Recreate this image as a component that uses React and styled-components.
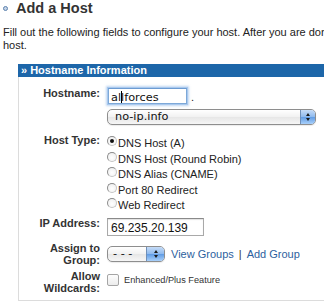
import React from "react";
import styled, { createGlobalStyle } from "styled-components";

const GlobalStyle = createGlobalStyle`
  html, body { margin: 0; padding: 0; background: #fff; overflow: hidden; }
  body { font-family: "Liberation Sans", Arial, sans-serif; color: #222; }
`;

const Page = styled.div`
  width: 470px;
  padding-left: 3px;
`;

const Title = styled.h1`
  margin: 0;
  display: flex;
  align-items: center;
  gap: 8px;
  height: 16px;
  font-size: 14.5px;
  line-height: 16px;
  font-weight: bold;
  color: #333;
`;

const Bullet = styled.span`
  width: 5px;
  height: 5px;
  border-radius: 50%;
  border: 1.5px solid #5d82ad;
  background: #c4d4e8;
  box-sizing: border-box;
  margin-top: 1px;
`;

const Intro = styled.p`
  margin: 10px 0 0;
  font-size: 11px;
  line-height: 13px;
  color: #222;
  white-space: nowrap;
`;

const Panel = styled.section`
  margin: 12px 0 0 15px;
  width: 440px;
`;

const PanelHeader = styled.div`
  height: 13px;
  background: #1d66a9;
  color: #fff;
  font-size: 11px;
  font-weight: bold;
  line-height: 13px;
  padding-left: 3px;
`;

const PanelBody = styled.div`
  border: 1px solid #dcdcdc;
  border-top: none;
  padding: 10px 0 6px;
`;

const Row = styled.div`
  display: grid;
  grid-template-columns: 81px 1fr;
  column-gap: 7px;
  align-items: start;
  margin-top: ${(p) => p.$gap || 0}px;
`;

const Label = styled.div`
  text-align: right;
  font-size: 11px;
  line-height: 12px;
  font-weight: bold;
  color: #333;
`;

const Control = styled.div`
  display: flex;
  align-items: ${(p) => p.$align || "flex-start"};
  gap: ${(p) => p.$gap || 0}px;
  margin-top: ${(p) => p.$top || 0}px;
`;

const TextBox = styled.div`
  box-sizing: border-box;
  width: ${(p) => p.$width}px;
  height: ${(p) => p.$height}px;
  margin-left: ${(p) => (p.$focus ? 1 : 0)}px;
  margin-top: ${(p) => p.$top || 0}px;
  padding: ${(p) => p.$pad};
  background: #fff;
  border: 1px solid ${(p) => (p.$focus ? "#7da8d8" : "#a9a9a9")};
  border-top-color: ${(p) => (p.$focus ? "#6c9bd2" : "#8a8a8a")};
  box-shadow: ${(p) =>
    p.$focus
      ? "0 0 0 1px #a9c9ee, 0 0 2px 2px rgba(140,180,230,0.55)"
      : "inset 0 1px 1px rgba(0,0,0,0.12)"};
  font-family: ${(p) =>
    p.$focus ? '"DejaVu Sans", Verdana, sans-serif' : '"Liberation Sans", Arial, sans-serif'};
  font-size: ${(p) => (p.$focus ? 11.3 : 12)}px;
  line-height: 13px;
  color: #111;
  white-space: nowrap;
`;

const Caret = styled.span`
  display: inline-block;
  width: 1px;
  height: 12px;
  margin-right: -1px;
  background: #000;
  vertical-align: -2px;
`;

const Dot = styled.span`
  font-size: 11px;
  line-height: 12px;
  margin-top: 4px;
  margin-left: 4px;
  color: #222;
`;

const SelectBox = styled.div`
  box-sizing: border-box;
  display: flex;
  align-items: stretch;
  width: ${(p) => p.$width}px;
  height: 16px;
  margin-top: ${(p) => p.$top || 0}px;
  border: 1px solid #8e8e8e;
  border-radius: 5px;
  background: linear-gradient(#ffffff, #f1f1f1 50%, #e6e6e6 51%, #f6f6f6);
  overflow: hidden;
  box-shadow: 0 1px 1px rgba(0, 0, 0, 0.08);
`;

const SelectValue = styled.div`
  flex: 1;
  padding-left: ${(p) => p.$pad}px;
  font-family: "DejaVu Sans", Verdana, sans-serif;
  font-size: 11.3px;
  line-height: 14px;
  color: #111;
  white-space: nowrap;
`;

const Stepper = styled.div`
  width: ${(p) => p.$width}px;
  border-left: 1px solid #6f8fb8;
  background: linear-gradient(#c6dcf7, #8db9ee 50%, #5f9be4 51%, #a9d0fa);
  display: flex;
  flex-direction: column;
  align-items: center;
  justify-content: center;
  gap: 2px;
`;

const Arrow = styled.span`
  width: 0;
  height: 0;
  border-left: 2.5px solid transparent;
  border-right: 2.5px solid transparent;
  ${(p) =>
    p.$down ? "border-top: 3px solid #1a1a1a;" : "border-bottom: 3px solid #1a1a1a;"}
`;

const RadioList = styled.div`
  display: flex;
  flex-direction: column;
`;

const Option = styled.label`
  display: flex;
  align-items: flex-start;
  height: 15.5px;
  gap: 1px;
`;

const RadioMark = styled.span`
  box-sizing: border-box;
  position: relative;
  width: 10px;
  height: 10px;
  margin-top: 2px;
  border-radius: 50%;
  border: 1px solid #8c8c8c;
  border-right-color: #c4c4c4;
  border-bottom-color: #c4c4c4;
  background: radial-gradient(circle at 50% 60%, #fff, #ececec);
  &::after {
    content: "";
    display: ${(p) => (p.$checked ? "block" : "none")};
    position: absolute;
    left: 2px;
    top: 2px;
    width: 4px;
    height: 4px;
    border-radius: 50%;
    background: #111;
  }
`;

const OptionText = styled.span`
  font-size: 11px;
  line-height: 13px;
  padding-top: 3px;
  color: #222;
  white-space: nowrap;
`;

const Link = styled.a`
  color: #2d5f9e;
  text-decoration: none;
  font-size: 11px;
  line-height: 12px;
  white-space: nowrap;
`;

const Pipe = styled.span`
  font-size: 11px;
  color: #333;
  margin: 0 5px 0 5px;
`;

const Checkbox = styled.span`
  box-sizing: border-box;
  width: 12px;
  height: 12px;
  border: 1px solid #a5a5a5;
  border-radius: 2px;
  background: linear-gradient(#fdfdfd, #ececec);
`;

const Note = styled.span`
  font-size: 9.2px;
  line-height: 12px;
  color: #333;
  white-space: nowrap;
`;

const hostTypes = [
  "DNS Host (A)",
  "DNS Host (Round Robin)",
  "DNS Alias (CNAME)",
  "Port 80 Redirect",
  "Web Redirect",
];

function Select({ width, value, pad, stepWidth }) {
  return (
    <SelectBox $width={width}>
      <SelectValue $pad={pad}>{value}</SelectValue>
      <Stepper $width={stepWidth}>
        <Arrow />
        <Arrow $down />
      </Stepper>
    </SelectBox>
  );
}

export default function App() {
  return (
    <>
      <GlobalStyle />
      <Page>
        <Title>
          <Bullet />
          Add a Host
        </Title>
        <Intro>
          Fill out the following fields to configure your host. After you are done, click the Add
          button to create your
          <br />
          host.
        </Intro>
        <Panel>
          <PanelHeader>» Hostname Information</PanelHeader>
          <PanelBody>
            <Row>
              <Label>Hostname:</Label>
              <Control>
                <TextBox $focus $width={79} $height={16} $top={1} $pad="2px 0 0 2px">
                  al
                  <Caret />
                  lforces
                </TextBox>
                <Dot>.</Dot>
              </Control>
            </Row>
            <Row $gap={5}>
              <div />
              <Select width={209} value="no-ip.info" pad={7} stepWidth={14} />
            </Row>
            <Row $gap={9}>
              <Label>Host Type:</Label>
              <RadioList>
                {hostTypes.map((t, i) => (
                  <Option key={t}>
                    <RadioMark $checked={i === 0} />
                    <OptionText>{t}</OptionText>
                  </Option>
                ))}
              </RadioList>
            </Row>
            <Row $gap={5}>
              <Label style={{ paddingTop: 0.5 }}>IP Address:</Label>
              <TextBox $width={97} $height={18} $top={1.5} $pad="3px 0 0 3px">
                69.235.20.139
              </TextBox>
            </Row>
            <Row $gap={6}>
              <Label>
                Assign to
                <br />
                Group:
              </Label>
              <Control $align="center" $gap={0} $top={4}>
                <Select width={58} value="- - -" pad={5} stepWidth={17} />
                <Link href="#" style={{ marginLeft: 6 }}>
                  View Groups
                </Link>
                <Pipe>|</Pipe>
                <Link href="#">Add Group</Link>
              </Control>
            </Row>
            <Row $gap={4}>
              <Label>
                Allow
                <br />
                Wildcards:
              </Label>
              <Control $align="center" $gap={5} $top={4}>
                <Checkbox />
                <Note>Enhanced/Plus Feature</Note>
              </Control>
            </Row>
          </PanelBody>
        </Panel>
      </Page>
    </>
  );
}
